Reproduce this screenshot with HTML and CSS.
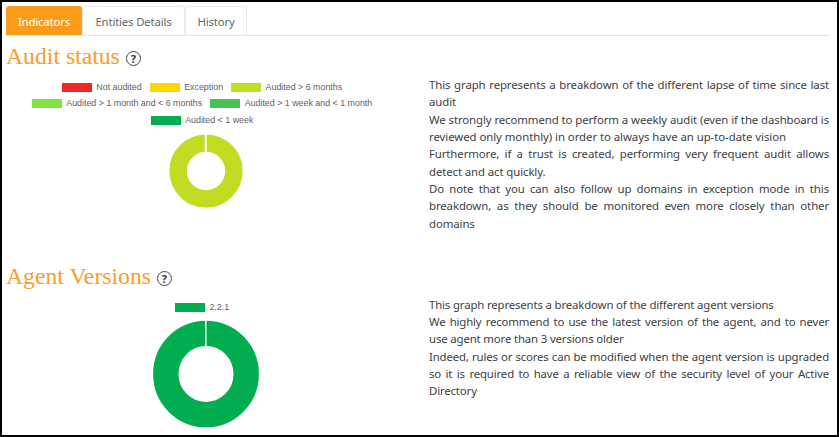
FILE: index.html
```html
<!DOCTYPE html>
<html lang="en">
<head>
<meta charset="utf-8">
<title>Indicators</title>
<link rel="stylesheet" href="styles.css">
</head>
<body>
<main class="page">
  <nav class="tabs">
    <a class="tab tab-active"><span>Indicators</span></a>
    <a class="tab tab-entities"><span>Entities Details</span></a>
    <a class="tab tab-history"><span>History</span></a>
  </nav>

  <section class="section section-audit">
    <h2 class="heading"><span class="heading-text">Audit status</span><span class="help">?</span></h2>
    <div class="columns">
      <div class="chart">
        <ul class="legend">
          <li class="row">
            <span class="item"><i class="swatch red"></i><span>Not audited</span></span>
            <span class="item"><i class="swatch yellow"></i><span>Exception</span></span>
            <span class="item"><i class="swatch lime"></i><span>Audited &gt; 6 months</span></span>
          </li>
          <li class="row">
            <span class="item"><i class="swatch light"></i><span>Audited &gt; 1 month and &lt; 6 months</span></span>
            <span class="item"><i class="swatch mid"></i><span>Audited &gt; 1 week and &lt; 1 month</span></span>
          </li>
          <li class="row">
            <span class="item"><i class="swatch green"></i><span>Audited &lt; 1 week</span></span>
          </li>
        </ul>
        <svg class="donut donut-small" viewBox="0 0 74 74">
          <circle cx="37" cy="37" r="27.9" fill="none" stroke="#c1dc22" stroke-width="17.4"/>
          <path d="M36.7 0V19" stroke="#fff" stroke-width="2"/>
        </svg>
      </div>
      <div class="text">
        <span class="line full">This graph represents a breakdown of the different lapse of time since last</span>
        <span class="line">audit</span>
        <span class="line full">We strongly recommend to perform a weekly audit (even if the dashboard is</span>
        <span class="line wide">reviewed only monthly) in order to always have an up-to-date vision</span>
        <span class="line full">Furthermore, if a trust is created, performing very frequent audit allows</span>
        <span class="line">detect and act quickly.</span>
        <span class="line full">Do note that you can also follow up domains in exception mode in this</span>
        <span class="line full">breakdown, as they should be monitored even more closely than other</span>
        <span class="line">domains</span>
      </div>
    </div>
  </section>

  <section class="section section-agent">
    <h2 class="heading"><span class="heading-text">Agent Versions</span><span class="help">?</span></h2>
    <div class="columns">
      <div class="chart">
        <ul class="legend">
          <li class="row"><span class="item"><i class="swatch green"></i><span>2.2.1</span></span></li>
        </ul>
        <svg class="donut donut-large" viewBox="0 0 106 108">
          <ellipse cx="53" cy="54" rx="40.2" ry="40.6" fill="none" stroke="#02ad50" stroke-width="25.4"/>
          <path d="M52.8 0V28" stroke="#fff" stroke-width="1.5"/>
        </svg>
      </div>
      <div class="text">
        <span class="line">This graph represents a breakdown of the different agent versions</span>
        <span class="line full">We highly recommend to use the latest version of the agent, and to never</span>
        <span class="line">use agent more than 3 versions older</span>
        <span class="line full">Indeed, rules or scores can be modified when the agent version is upgraded</span>
        <span class="line full">so it is required to have a reliable view of the security level of your Active</span>
        <span class="line">Directory</span>
      </div>
    </div>
  </section>
</main>
</body>
</html>
```
FILE: styles.css
```css
* { box-sizing: border-box; }

body {
  margin: 0;
  background: #fff;
  color: #3c4044;
  font-family: "Noto Sans", "Open Sans", sans-serif;
}

.page {
  width: 839px;
  height: 437px;
  padding: 4px 8px 0 4px;
  border: 2px solid #000;
  overflow: hidden;
}

.tabs {
  display: flex;
  height: 30px;
  border-bottom: 1px solid #e2e5e8;
}

.tab {
  display: flex;
  align-items: center;
  justify-content: center;
  height: 29px;
  border: 1px solid #e9ecef;
  border-bottom: 0;
  border-radius: 3px 3px 0 0;
  font-size: 11.4px;
  letter-spacing: -0.17px;
  color: #63676b;
  white-space: nowrap;
}

.tab-active {
  width: 76px;
  border-color: #fa9c1a;
  background: #fa9c1a;
  color: #fff;
}

.tab-entities { width: 103px; }
.tab-history { width: 62px; }

.heading {
  display: flex;
  align-items: center;
  height: 36px;
  margin: 0;
  padding-top: 2px;
  color: #fa9c28;
  font: 400 23.7px/30px "Liberation Serif", serif;
}

.help {
  display: flex;
  align-items: center;
  justify-content: center;
  width: 15px;
  height: 15px;
  margin: 4px 0 0 6px;
  border: 1px solid #444;
  border-radius: 50%;
  color: #333;
  font: 700 11px/13px "Noto Sans", sans-serif;
}

.section-audit { height: 220px; padding-top: 1px; }
.section-agent { height: 175px; padding-top: 1px; }

.columns { display: flex; }

.chart {
  display: flex;
  flex-direction: column;
  align-items: center;
  width: 400px;
  margin-right: 23px;
}

.legend {
  width: 100%;
  margin: 0;
  padding: 6px 8px 0 0;
  list-style: none;
  color: #606060;
  font: 8.87px/16.6px "Liberation Sans", sans-serif;
}

.row {
  display: flex;
  justify-content: center;
  gap: 8px;
  height: 16.6px;
}

.item {
  display: flex;
  align-items: center;
  white-space: nowrap;
}

.item span { margin-top: -1px; }

.swatch {
  width: 30px;
  height: 9px;
  margin-right: 4.5px;
}

.red { background: #f12828; }
.yellow { background: #ffd800; }
.lime { background: #c1dc22; }
.light { background: #83e143; }
.mid { background: #47c04f; }
.green { background: #02ad50; }

.donut { display: block; }
.donut-small { width: 74px; height: 74px; margin-top: 5px; }
.donut-large { width: 106px; height: 108px; margin-top: 4.5px; }

.text {
  width: 400px;
  padding-top: 3px;
  font-size: 11.4px;
  line-height: 17.34px;
  letter-spacing: -0.1px;
}

.section-agent .text {
  padding-top: 2.6px;
  letter-spacing: -0.15px;
}

.line {
  display: block;
  white-space: nowrap;
}

.wide { letter-spacing: -0.06px; }

.full { text-align-last: justify; }
```
